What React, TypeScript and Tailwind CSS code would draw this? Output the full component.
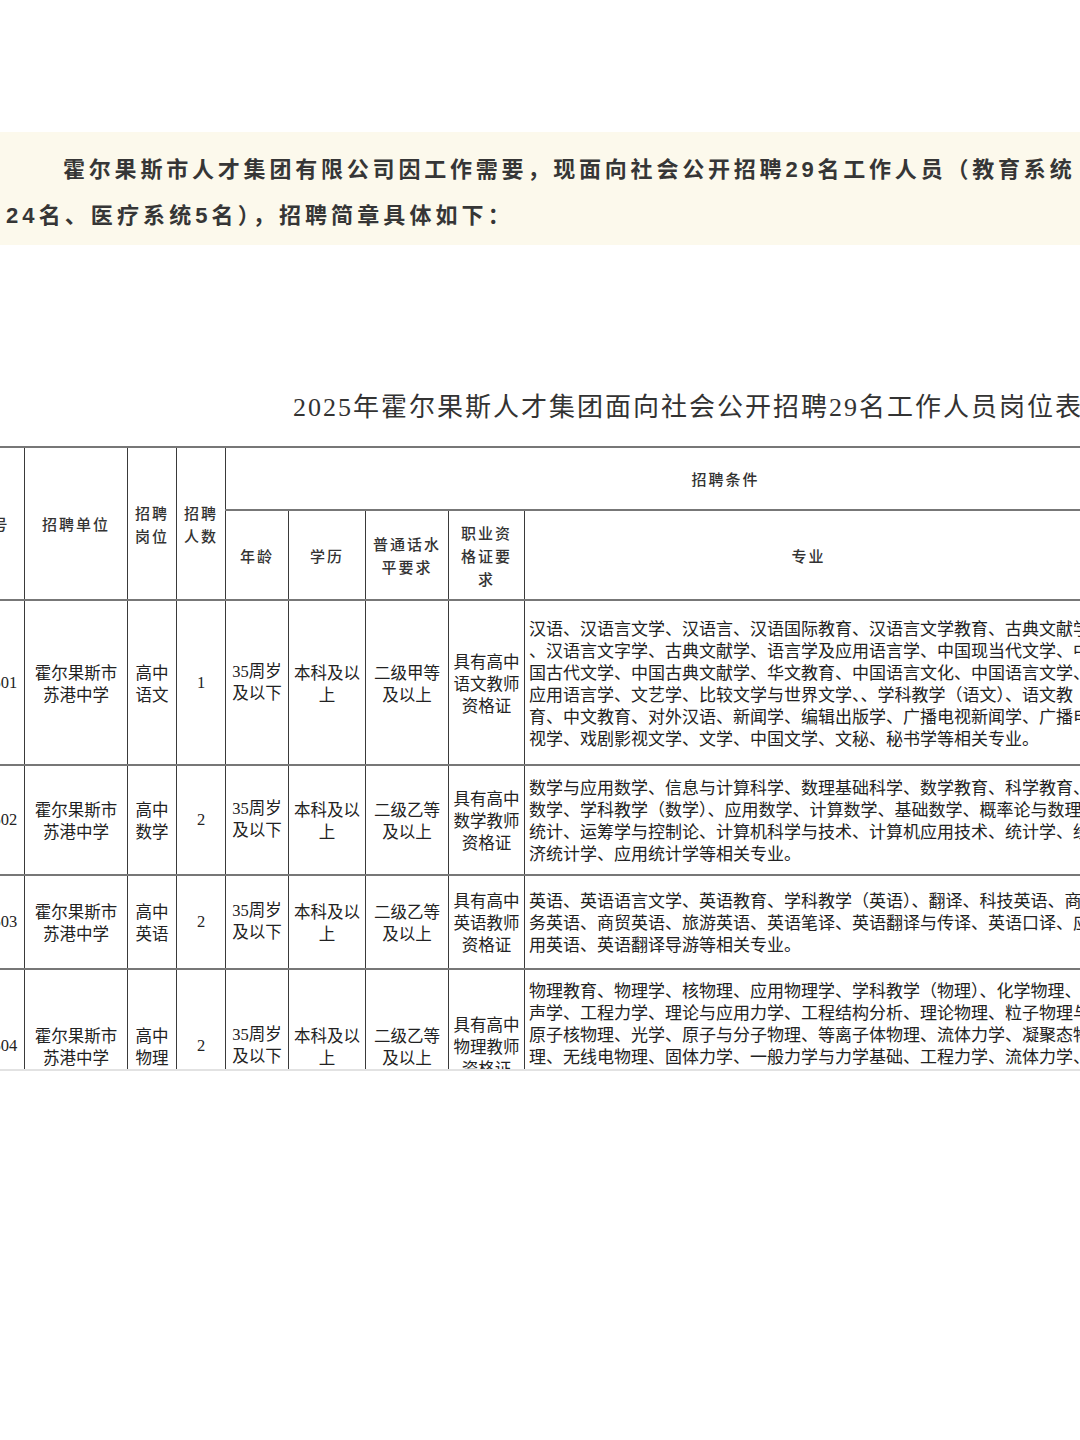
const SANS = "font-['Noto_Sans_CJK_SC',sans-serif]";
const MIX = "font-['Liberation_Serif','Noto_Sans_CJK_SC',serif]";

type Row = {
  code: string;
  post: string[];
  count: string;
  mandarin: string[];
  cert: string[];
  major: string[];
  height: string;
  top?: boolean;
};

const rows: Row[] = [
  {
    code: '202501',
    post: ['高中', '语文'],
    count: '1',
    mandarin: ['二级甲等', '及以上'],
    cert: ['具有高中', '语文教师', '资格证'],
    major: [
      '汉语、汉语言文学、汉语言、汉语国际教育、汉语言文学教育、古典文献学',
      '、汉语言文字学、古典文献学、语言学及应用语言学、中国现当代文学、中',
      '国古代文学、中国古典文献学、华文教育、中国语言文化、中国语言文学、',
      '应用语言学、文艺学、比较文学与世界文学、、学科教学（语文）、语文教',
      '育、中文教育、对外汉语、新闻学、编辑出版学、广播电视新闻学、广播电',
      '视学、戏剧影视文学、文学、中国文学、文秘、秘书学等相关专业。',
    ],
    height: 'h-[165px]',
  },
  {
    code: '202502',
    post: ['高中', '数学'],
    count: '2',
    mandarin: ['二级乙等', '及以上'],
    cert: ['具有高中', '数学教师', '资格证'],
    major: [
      '数学与应用数学、信息与计算科学、数理基础科学、数学教育、科学教育、',
      '数学、学科教学（数学）、应用数学、计算数学、基础数学、概率论与数理',
      '统计、运筹学与控制论、计算机科学与技术、计算机应用技术、统计学、经',
      '济统计学、应用统计学等相关专业。',
    ],
    height: 'h-[110px]',
  },
  {
    code: '202503',
    post: ['高中', '英语'],
    count: '2',
    mandarin: ['二级乙等', '及以上'],
    cert: ['具有高中', '英语教师', '资格证'],
    major: [
      '英语、英语语言文学、英语教育、学科教学（英语）、翻译、科技英语、商',
      '务英语、商贸英语、旅游英语、英语笔译、英语翻译与传译、英语口译、应',
      '用英语、英语翻译导游等相关专业。',
    ],
    height: 'h-[94px]',
  },
  {
    code: '202504',
    post: ['高中', '物理'],
    count: '2',
    mandarin: ['二级乙等', '及以上'],
    cert: ['具有高中', '物理教师', '资格证'],
    major: [
      '物理教育、物理学、核物理、应用物理学、学科教学（物理）、化学物理、',
      '声学、工程力学、理论与应用力学、工程结构分析、理论物理、粒子物理与',
      '原子核物理、光学、原子与分子物理、等离子体物理、流体力学、凝聚态物',
      '理、无线电物理、固体力学、一般力学与力学基础、工程力学、流体力学、',
    ],
    height: 'h-[154px]',
    top: true,
  },
];

const cell = 'border-x border-x-[#3a3a3a] border-y-2 border-y-[#777] p-0 text-center align-middle';

function Lines({ items }: { items: string[] }) {
  return (
    <>
      {items.map((t, i) => (
        <div key={i} className="whitespace-nowrap">
          {t}
        </div>
      ))}
    </>
  );
}

function HeadCell({ lines }: { lines: string[] }) {
  return (
    <div className={`${SANS} text-[15px] leading-[23px] tracking-[2px] font-medium text-[#333]`}>
      <Lines items={lines} />
    </div>
  );
}

export default function App() {
  return (
    <div className="w-[1080px] h-[1440px] bg-white overflow-hidden">
      <div className="h-[132px]" />

      {/* intro banner */}
      <div className="h-[113px] bg-[#fcf9ec] pt-[15px] pl-[6px]">
        <p className="font-['Liberation_Sans','Noto_Sans_CJK_SC',sans-serif] font-bold text-[22px] leading-[46px] tracking-[3.8px] text-[#363636] indent-[57px] whitespace-nowrap">
          霍尔果斯市人才集团有限公司因工作需要，现面向社会公开招聘29名工作人员（教育系统
        </p>
        <p className="font-['Liberation_Sans','Noto_Sans_CJK_SC',sans-serif] font-bold text-[22px] leading-[46px] tracking-[4.1px] text-[#363636] whitespace-nowrap">
          24名、医疗系统5名），招聘简章具体如下：
        </p>
      </div>

      <div className="h-[143px]" />

      <h1 className={`${MIX} text-[26px] leading-[40px] tracking-[2px] text-[#333] pl-[293px] whitespace-nowrap font-normal`}>
        2025年霍尔果斯人才集团面向社会公开招聘29名工作人员岗位表
      </h1>

      <div className="h-[18px]" />

      <div className="h-[625px] overflow-hidden border-b-2 border-b-[#e2e2e2]">
        <table className="table-fixed border-collapse ml-[-40px] w-[1265px]">
          <colgroup>
            <col className="w-[64px]" />
            <col className="w-[103px]" />
            <col className="w-[49px]" />
            <col className="w-[49px]" />
            <col className="w-[63px]" />
            <col className="w-[77px]" />
            <col className="w-[83px]" />
            <col className="w-[76px]" />
            <col className="w-[568px]" />
            <col className="w-[133px]" />
          </colgroup>
          <thead>
            <tr>
              <th rowSpan={2} className={cell}>
                <HeadCell lines={['序号']} />
              </th>
              <th rowSpan={2} className={cell}>
                <HeadCell lines={['招聘单位']} />
              </th>
              <th rowSpan={2} className={cell}>
                <HeadCell lines={['招聘', '岗位']} />
              </th>
              <th rowSpan={2} className={cell}>
                <HeadCell lines={['招聘', '人数']} />
              </th>
              <th colSpan={6} className={`${cell} h-[63px]`}>
                <HeadCell lines={['招聘条件']} />
              </th>
            </tr>
            <tr>
              <th className={`${cell} h-[90px]`}>
                <HeadCell lines={['年龄']} />
              </th>
              <th className={cell}>
                <HeadCell lines={['学历']} />
              </th>
              <th className={cell}>
                <HeadCell lines={['普通话水', '平要求']} />
              </th>
              <th className={cell}>
                <HeadCell lines={['职业资', '格证要', '求']} />
              </th>
              <th className={cell}>
                <HeadCell lines={['专业']} />
              </th>
              <th className={cell}>
                <HeadCell lines={['其他条件']} />
              </th>
            </tr>
          </thead>
          <tbody className="text-[16.5px] leading-[22px] text-[#222]">
            {rows.map((r) => (
              <tr key={r.code}>
                <td className={`${cell} ${r.height} ${MIX}`}>{r.code}</td>
                <td className={`${cell} ${SANS}`}>
                  <Lines items={['霍尔果斯市', '苏港中学']} />
                </td>
                <td className={`${cell} ${SANS}`}>
                  <Lines items={r.post} />
                </td>
                <td className={`${cell} ${MIX}`}>{r.count}</td>
                <td className={`${cell} ${MIX}`}>
                  <Lines items={['35周岁', '及以下']} />
                </td>
                <td className={`${cell} ${SANS}`}>
                  <Lines items={['本科及以', '上']} />
                </td>
                <td className={`${cell} ${SANS}`}>
                  <Lines items={r.mandarin} />
                </td>
                <td className={`${cell} ${SANS}`}>
                  <Lines items={r.cert} />
                </td>
                <td className={`${cell} ${SANS} text-left text-[17px] pl-[4px] ${r.top ? 'align-top pt-[9px]' : ''}`}>
                  <Lines items={r.major} />
                </td>
                <td className={cell} />
              </tr>
            ))}
          </tbody>
        </table>
      </div>
    </div>
  );
}
